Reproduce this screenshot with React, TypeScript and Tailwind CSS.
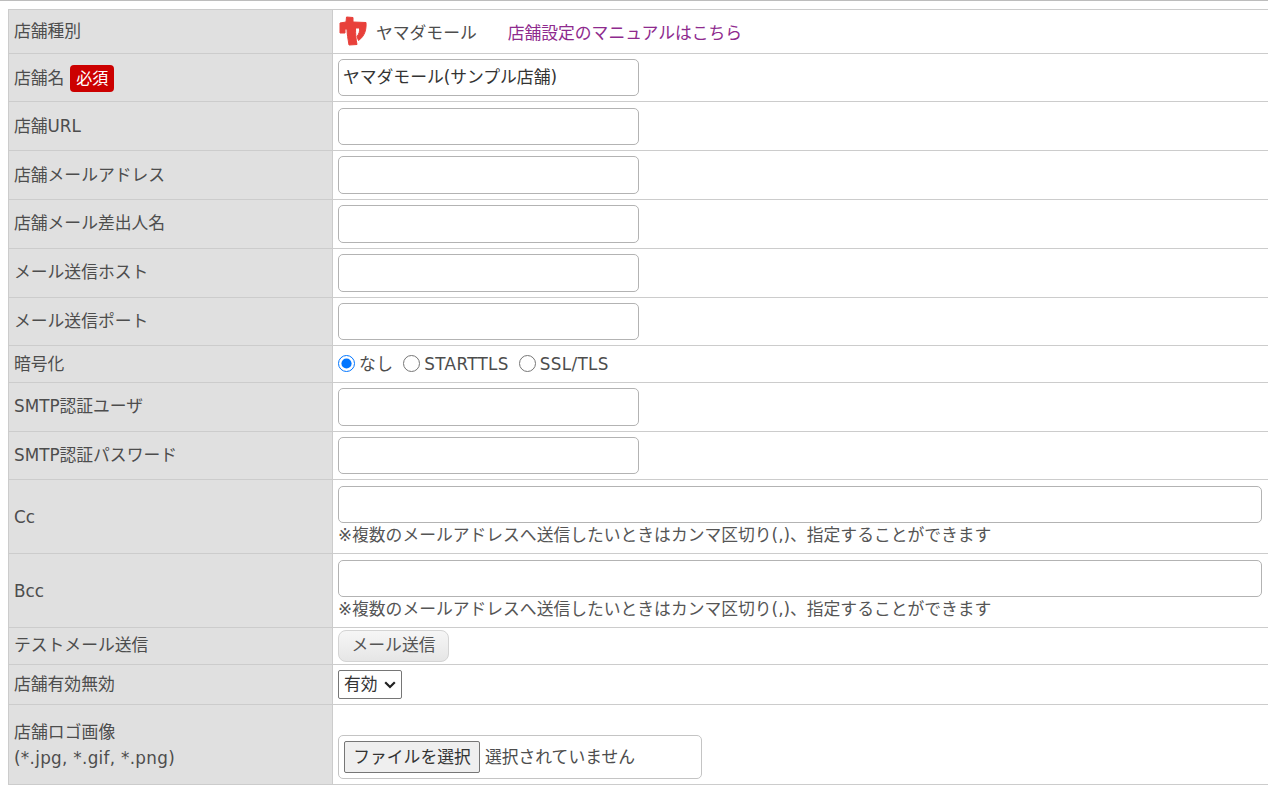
const FONT = "font-['DejaVu_Sans','Noto_Sans_CJK_JP',sans-serif]";

const labelCell = "border border-[#cccccc] bg-[#e0e0e0] pl-[5px] pr-1 py-0 text-left align-middle font-normal w-[323px]";
const valueCell = "border-y border-[#cccccc] bg-white pl-[5px] py-0 align-middle";
const inputClass = "block h-[37.6px] rounded-[5px] border border-[#b3b3b3] bg-white px-1 pb-[3px] text-[16.8px] text-[#333333] outline-none";
const NOTE = "※複数のメールアドレスへ送信したいときはカンマ区切り(,)、指定することができます";

function Logo() {
  return (
    <svg width="28" height="30" viewBox="0 0 28 30" className="mb-[2px] ml-px block">
      <path
        d="M1 7 L7 6 L7.5 1 L14 1.5 L14 6 L27 6.5 C27.5 13 26 20 19.5 24.5 L18 20.5 C20 18 21 15 20.5 12 L16.5 12 C16.5 18 17 24 18 28.5 L10 29 C9 23 8 18 8 13 L6 13 L6 17 L1 17 Z"
        fill="#e8403a"
        stroke="#e8403a"
        strokeWidth="1"
        strokeLinejoin="round"
      />
    </svg>
  );
}

function TextRow({ label, height, value, lower, cellClass = "" }: { label: React.ReactNode; height: string; value?: string; lower?: boolean; cellClass?: string }) {
  return (
    <tr className={height}>
      <th className={`${labelCell} ${lower ? "pt-[2px]" : ""}`}>{label}</th>
      <td className={`${valueCell} ${cellClass}`}>
        <input type="text" defaultValue={value} className={`${inputClass} w-[301px]`} />
      </td>
    </tr>
  );
}

function Radio({ label, checked }: { label: string; checked?: boolean }) {
  return (
    <label className="mr-[10px] inline-flex items-center gap-[4px]">
      <input type="radio" name="enc" defaultChecked={checked} className="m-0 h-[17px] w-[17px] accent-[#0075ff]" />
      <span className="pt-[3px] tracking-[0.35px]">{label}</span>
    </label>
  );
}

function NoteRow({ label, height }: { label: string; height: string }) {
  return (
    <tr className={height}>
      <th className={`${labelCell} pt-[2px]`}>{label}</th>
      <td className={valueCell}>
        <input type="text" className={`${inputClass} w-[924px]`} />
        <p className="text-[16.8px] leading-[24px] text-[#555555]">{NOTE}</p>
      </td>
    </tr>
  );
}

export default function App() {
  return (
    <div className={`${FONT} h-[790px] w-[1268px] overflow-hidden bg-white text-[16.8px] text-[#4d4d4d]`}>
      <div className="h-px bg-[#bdbdbd]" />
      <div className="pl-2 pt-2">
        <table className="w-[1300px] table-fixed border-collapse">
          <colgroup>
            <col className="w-[324px]" />
            <col />
          </colgroup>
          <tbody>
            <tr className="h-[44px]">
              <th className={labelCell}>店舗種別</th>
              <td className={valueCell}>
                <div className="flex items-center">
                  <Logo />
                  <span className="ml-[9px] pt-[4px]">ヤマダモール</span>
                  <a className="ml-[31px] pt-[4px] text-[#8e2a8e]">店舗設定のマニュアルはこちら</a>
                </div>
              </td>
            </tr>
            <TextRow
              height="h-[48px]"
              value="ヤマダモール(サンプル店舗)"
              lower
              label={
                <span className="flex items-center gap-[6px]">
                  店舗名
                  <span className="rounded-[4px] bg-[#cc0000] px-[6px] text-[16px] leading-[27px] text-white">必須</span>
                </span>
              }
            />
            <TextRow height="h-[49px]" label="店舗URL" lower cellClass="pt-[1px]" />
            <TextRow height="h-[49px]" label="店舗メールアドレス" lower />
            <TextRow height="h-[49px]" label="店舗メール差出人名" />
            <TextRow height="h-[49px]" label="メール送信ホスト" />
            <TextRow height="h-[48px]" label="メール送信ポート" />
            <tr className="h-[37px]">
              <th className={`${labelCell} pt-[2px]`}>暗号化</th>
              <td className={valueCell}>
                <Radio label="なし" checked />
                <Radio label="STARTTLS" />
                <Radio label="SSL/TLS" />
              </td>
            </tr>
            <TextRow height="h-[49px]" label="SMTP認証ユーザ" />
            <TextRow height="h-[48px]" label="SMTP認証パスワード" />
            <NoteRow height="h-[74px]" label="Cc" />
            <NoteRow height="h-[74px]" label="Bcc" />
            <tr className="h-[37px]">
              <th className={labelCell}>テストメール送信</th>
              <td className={valueCell}>
                <button className="h-[32px] w-[111px] rounded-[8px] border border-[#d4d4d4] bg-gradient-to-b from-[#f6f6f6] to-[#e6e6e6] text-[16.8px] text-[#555555]">
                  メール送信
                </button>
              </td>
            </tr>
            <tr className="h-[40px]">
              <th className={labelCell}>店舗有効無効</th>
              <td className={valueCell}>
                <div className="relative w-[64px]">
                  <select className="block h-[29px] w-[64px] appearance-none rounded-[2px] border border-[#767676] bg-white pl-[5px] text-[16.8px] text-[#333333]">
                    <option>有効</option>
                    <option>無効</option>
                  </select>
                  <svg width="12" height="8" viewBox="0 0 12 8" className="pointer-events-none absolute right-[6px] top-[11px]">
                    <path d="M1.2 1.2 L6 6 L10.8 1.2" fill="none" stroke="#222222" strokeWidth="2.2" />
                  </svg>
                </div>
              </td>
            </tr>
            <tr className="h-[80px]">
              <th className={labelCell}>
                <span className="block leading-[26px] tracking-[0.1px]">
                  店舗ロゴ画像
                  <br />
                  <span className="tracking-[0.3px]">(*.jpg, *.gif, *.png)</span>
                </span>
              </th>
              <td className={`${valueCell} pt-[24px]`}>
                <div className="flex h-[44px] w-[364px] items-center rounded-[5px] border border-[#c4c4c4] pl-[5px]">
                  <button className="h-[32px] w-[136px] rounded-[2px] border border-[#767676] bg-[#efefef] pt-[2px] text-[16.8px] text-[#333333]">
                    ファイルを選択
                  </button>
                  <span className="ml-[5px] pt-[2px]">選択されていません</span>
                </div>
              </td>
            </tr>
          </tbody>
        </table>
      </div>
    </div>
  );
}
